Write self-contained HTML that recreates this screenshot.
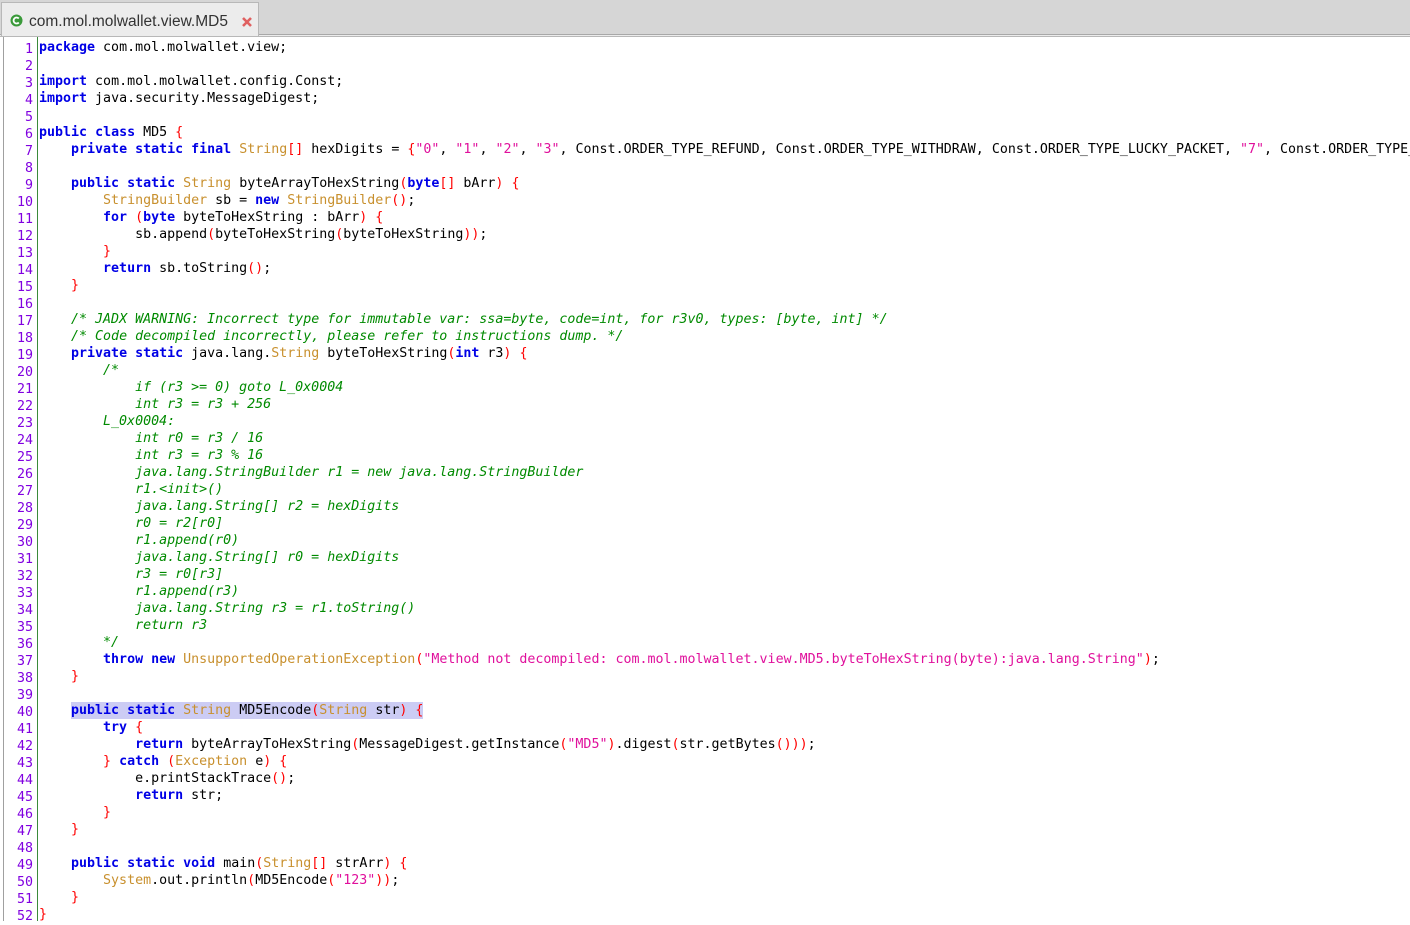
<!DOCTYPE html>
<html><head><meta charset="utf-8"><style>
html,body{margin:0;padding:0;width:1410px;height:921px;overflow:hidden;background:#fff;}
.top{position:absolute;left:0;top:0;width:1410px;height:34px;background:#d6d6d6;}
.sep{position:absolute;left:0;top:34px;width:1410px;height:3px;background:#ececec;border-top:1px solid #a8a8a8;border-bottom:1px solid #b8b8b8;box-sizing:border-box;}
.tab{position:absolute;left:1px;top:2px;width:258px;height:34px;background:#ececec;border:1px solid #b8b8b8;border-bottom:none;box-sizing:border-box;font:15.5px "Liberation Sans",sans-serif;color:#333;}
.tab .t{position:absolute;left:27px;top:10px;}
.ed{position:absolute;left:3px;top:37px;width:1407px;height:884px;background:#fff;border-left:1px solid #a0a0a0;}
.gut{position:absolute;left:4px;top:41px;width:29px;text-align:right;}
.gl{position:absolute;left:37px;top:37px;width:1px;height:884px;background:#3a8a3a;}
pre{margin:0;font:13.3px/17px "DejaVu Sans Mono",monospace;}
.code{position:absolute;left:39px;top:39px;color:#000;white-space:pre;}
.gut pre{color:#8000e0;}
.k{color:#0000e6;font-weight:bold}
.t{color:#c8902e}
.p{color:#ff0000}
.s{color:#e0109c}
.c{color:#008a00;font-style:italic}
.hl{position:absolute;left:71px;top:702px;width:352px;height:17px;background:#ccccf4;}
</style></head><body>
<div class="top"></div>
<div class="sep"></div>
<div class="tab"><svg style="position:absolute;left:8px;top:11px" width="13" height="13" viewBox="0 0 13 13"><circle cx="6.5" cy="6.5" r="6" fill="#3a9a3a"/><path d="M8.8 4.5A3 3 0 1 0 8.8 8.5" stroke="#fff" stroke-width="1.8" fill="none"/></svg><span class="t" style="color:#333">com.mol.molwallet.view.MD5</span><svg style="position:absolute;left:239px;top:13px" width="12" height="12" viewBox="0 0 12 12"><path d="M2 2L10 10M10 2L2 10" stroke="#e06060" stroke-width="2.6"/></svg></div>
<div class="ed"></div>
<div class="hl"></div>
<div class="gl"></div>
<div class="gut"><pre>1
2
3
4
5
6
7
8
9
10
11
12
13
14
15
16
17
18
19
20
21
22
23
24
25
26
27
28
29
30
31
32
33
34
35
36
37
38
39
40
41
42
43
44
45
46
47
48
49
50
51
52</pre></div>
<pre class="code"><span class="k">package</span> com.mol.molwallet.view;

<span class="k">import</span> com.mol.molwallet.config.Const;
<span class="k">import</span> java.security.MessageDigest;

<span class="k">public</span> <span class="k">class</span> MD5 <span class="p">{</span>
    <span class="k">private</span> <span class="k">static</span> <span class="k">final</span> <span class="t">String</span><span class="p">[]</span> hexDigits = <span class="p">{</span><span class="s">"0"</span>, <span class="s">"1"</span>, <span class="s">"2"</span>, <span class="s">"3"</span>, Const.ORDER_TYPE_REFUND, Const.ORDER_TYPE_WITHDRAW, Const.ORDER_TYPE_LUCKY_PACKET, <span class="s">"7"</span>, Const.ORDER_TYPE_

    <span class="k">public</span> <span class="k">static</span> <span class="t">String</span> byteArrayToHexString<span class="p">(</span><span class="k">byte</span><span class="p">[]</span> bArr<span class="p">)</span> <span class="p">{</span>
        <span class="t">StringBuilder</span> sb = <span class="k">new</span> <span class="t">StringBuilder</span><span class="p">()</span>;
        <span class="k">for</span> <span class="p">(</span><span class="k">byte</span> byteToHexString : bArr<span class="p">)</span> <span class="p">{</span>
            sb.append<span class="p">(</span>byteToHexString<span class="p">(</span>byteToHexString<span class="p">))</span>;
        <span class="p">}</span>
        <span class="k">return</span> sb.toString<span class="p">()</span>;
    <span class="p">}</span>

    <span class="c">/* JADX WARNING: Incorrect type for immutable var: ssa=byte, code=int, for r3v0, types: [byte, int] */</span>
    <span class="c">/* Code decompiled incorrectly, please refer to instructions dump. */</span>
    <span class="k">private</span> <span class="k">static</span> java.lang.<span class="t">String</span> byteToHexString<span class="p">(</span><span class="k">int</span> r3<span class="p">)</span> <span class="p">{</span>
<span class="c">        /*
            if (r3 &gt;= 0) goto L_0x0004
            int r3 = r3 + 256
        L_0x0004:
            int r0 = r3 / 16
            int r3 = r3 % 16
            java.lang.StringBuilder r1 = new java.lang.StringBuilder
            r1.&lt;init&gt;()
            java.lang.String[] r2 = hexDigits
            r0 = r2[r0]
            r1.append(r0)
            java.lang.String[] r0 = hexDigits
            r3 = r0[r3]
            r1.append(r3)
            java.lang.String r3 = r1.toString()
            return r3
        */</span>
        <span class="k">throw</span> <span class="k">new</span> <span class="t">UnsupportedOperationException</span><span class="p">(</span><span class="s">"Method not decompiled: com.mol.molwallet.view.MD5.byteToHexString(byte):java.lang.String"</span><span class="p">)</span>;
    <span class="p">}</span>

    <span class="k">public</span> <span class="k">static</span> <span class="t">String</span> MD5Encode<span class="p">(</span><span class="t">String</span> str<span class="p">)</span> <span class="p">{</span>
        <span class="k">try</span> <span class="p">{</span>
            <span class="k">return</span> byteArrayToHexString<span class="p">(</span>MessageDigest.getInstance<span class="p">(</span><span class="s">"MD5"</span><span class="p">)</span>.digest<span class="p">(</span>str.getBytes<span class="p">()))</span>;
        <span class="p">}</span> <span class="k">catch</span> <span class="p">(</span><span class="t">Exception</span> e<span class="p">)</span> <span class="p">{</span>
            e.printStackTrace<span class="p">()</span>;
            <span class="k">return</span> str;
        <span class="p">}</span>
    <span class="p">}</span>

    <span class="k">public</span> <span class="k">static</span> <span class="k">void</span> main<span class="p">(</span><span class="t">String</span><span class="p">[]</span> strArr<span class="p">)</span> <span class="p">{</span>
        <span class="t">System</span>.out.println<span class="p">(</span>MD5Encode<span class="p">(</span><span class="s">"123"</span><span class="p">))</span>;
    <span class="p">}</span>
<span class="p">}</span></pre>
</body></html>
